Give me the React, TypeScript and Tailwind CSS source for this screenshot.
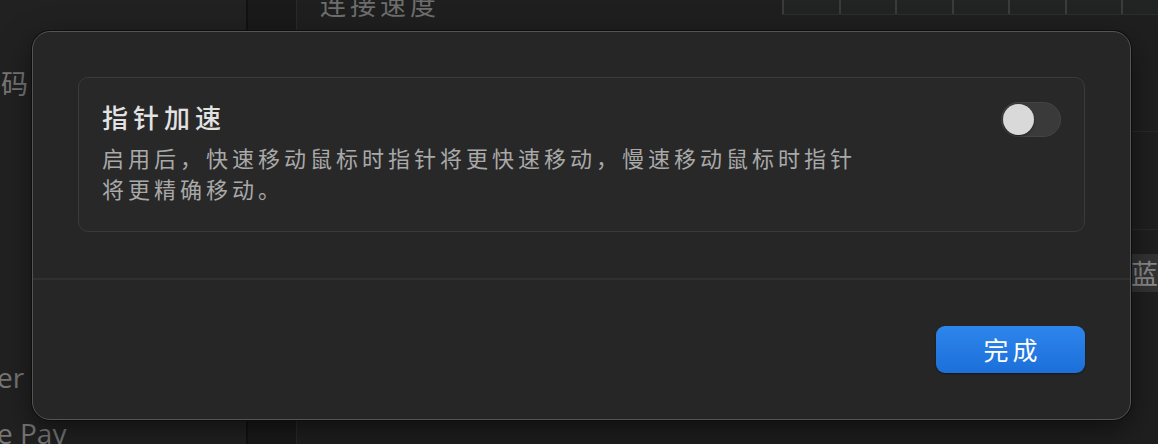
import React, { useState } from 'react';

const cjk = { fontFamily: '"Noto Sans CJK SC", "Noto Sans", sans-serif' };

const Toggle = ({ on, onChange }: { on: boolean; onChange: (v: boolean) => void }) => {
  return (
    <button
      onClick={() => onChange(!on)}
      className={
        'relative flex h-[35px] w-[60px] shrink-0 items-center rounded-full border px-[1px] ' +
        (on ? 'justify-end border-[#2a7be4] bg-[#2a7be4]' : 'justify-start border-[#444444] bg-[#3a3a3a]')
      }
    >
      <span className="block h-[31px] w-[31px] rounded-full bg-[#d9d9d9] shadow-[0_1px_2px_rgba(0,0,0,0.5)]" />
    </button>
  );
};

const App = () => {
  const [accel, setAccel] = useState(false);

  return (
    <div className="relative flex h-[444px] w-[1158px] overflow-hidden bg-[#1b1b1b]" style={cjk}>
      {/* sidebar behind the sheet */}
      <div className="flex h-full w-[246px] shrink-0 flex-col bg-[#212121] text-[#767676]">
        <div className="mt-[64px] pl-[1px] text-[27px] leading-[38px]">码</div>
        <div className="ml-[-3px] mt-[256px] text-[28px] leading-[38px]" style={{ fontFamily: '"Open Sans", sans-serif' }}>er</div>
        <div className="ml-[-3px] mt-[18px] text-[28px] leading-[38px]" style={{ fontFamily: '"Open Sans", sans-serif' }}>e Pay</div>
      </div>
      <div className="h-full w-[2px] shrink-0 bg-[#121212]" />
      <div className="h-full w-[49px] shrink-0 border-r border-[#2a2a2a] bg-[#1a1a1a]" />

      {/* settings pane behind the sheet */}
      <div className="flex h-full flex-1 flex-col bg-[#1e1f1e]">
        <div className="flex h-[20px] items-start">
          <div className="mt-[-12px] pl-[23px] text-[26px] leading-[32px] tracking-[4px] text-[#6e6e6e]">连接速度</div>
          <div className="ml-auto flex h-[15px] w-[376px] border-b border-[#2c2e2d] bg-[#222423]">
            <div className="flex h-full w-[341px] justify-between">
              {[0, 1, 2, 3, 4, 5, 6].map((i) => (
                <span key={i} className="block h-full w-[2px] bg-[#3a3c3b]" />
              ))}
            </div>
          </div>
        </div>
        <div className="h-[112px] border-b border-[#282928]" />
        <div className="h-[98px] border-b border-[#282928]" />
        <div className="mt-[24px] flex justify-end">
          <div className="h-[38px] w-[32px] overflow-hidden whitespace-nowrap bg-[#333333] pl-[5px] text-[27px] leading-[38px] text-[#8a8a8a]">
            蓝牙
          </div>
        </div>
      </div>

      {/* sheet */}
      <div className="absolute left-[32px] top-[31px] flex h-[389px] w-[1099px] flex-col rounded-[18px] border border-[#545454] bg-[#262626] shadow-[0_0_0_1px_#0e0e0e,0_10px_30px_rgba(0,0,0,0.5)]">
        <div className="mx-[45px] mt-[45px] flex h-[155px] items-start justify-between rounded-[10px] border border-[#3a3a3a] bg-[#282828] pl-[23px] pr-[23px]">
          <div className="flex flex-col pt-[23px]">
            <div className="text-[26px] font-medium leading-[32px] tracking-[5px] text-[#e2e2e2]">指针加速</div>
            <div className="mt-[9px] max-w-[800px] text-[22px] leading-[31px] tracking-[4px] text-[#a9a9a9]">
              启用后，快速移动鼠标时指针将更快速移动，慢速移动鼠标时指针
              <br />
              将更精确移动。
            </div>
          </div>
          <div className="pt-[24px]">
            <Toggle on={accel} onChange={setAccel} />
          </div>
        </div>
        <div className="mt-[46px] h-[2px] w-full bg-[#303030]" />
        <div className="flex flex-1 items-start justify-end pr-[45px] pt-[46px]">
          <button className="flex h-[47px] w-[149px] items-center justify-center rounded-[9px] bg-gradient-to-b from-[#2d86ec] to-[#1c6fd9] pl-[4px] text-[25px] leading-[47px] tracking-[4px] text-white shadow-[0_1px_2px_rgba(0,0,0,0.4)]">
            完成
          </button>
        </div>
      </div>
    </div>
  );
};

export default App;
